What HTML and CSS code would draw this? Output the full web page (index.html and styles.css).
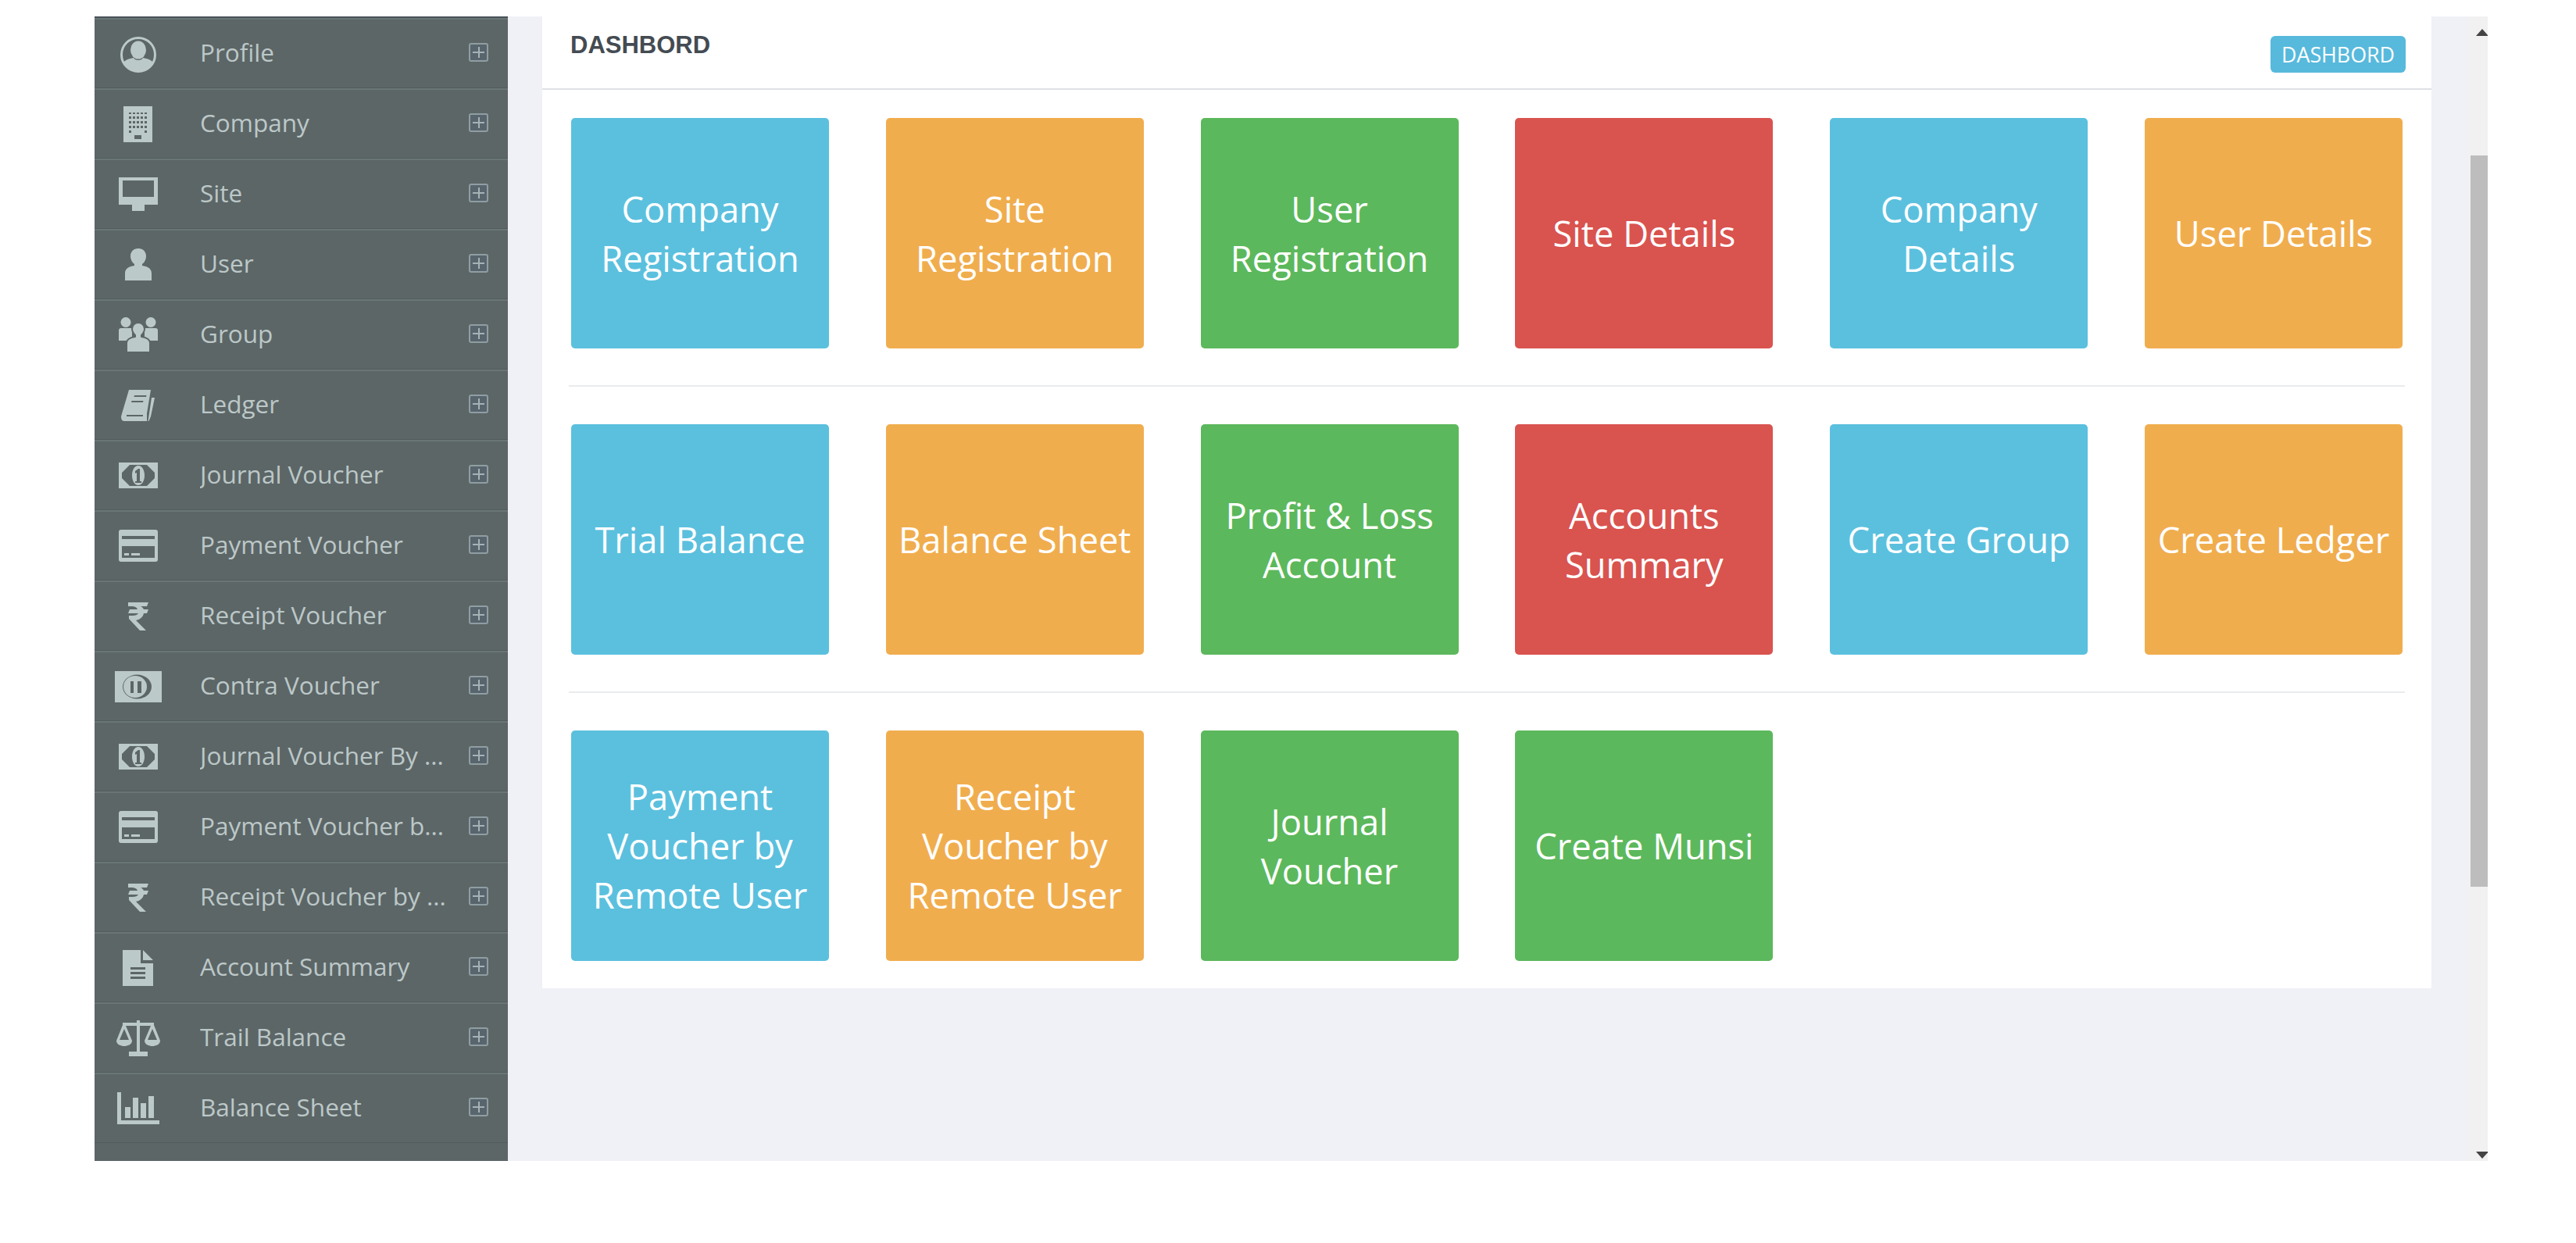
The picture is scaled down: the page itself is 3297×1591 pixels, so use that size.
FILE: index.html
```html
<!DOCTYPE html>
<html lang="en">
<head>
<meta charset="utf-8">
<title>Dashbord</title>
<link rel="stylesheet" href="styles.css">
</head>
<body>
<svg class="defs" width="0" height="0" aria-hidden="true">
  <symbol id="i-profile" viewBox="0 0 46 46">
    <circle class="ring" cx="23" cy="23" r="21.500"/>
    <ellipse cx="23" cy="17" rx="10" ry="11.500"/>
    <path d="M17 27c1 2 3 3 6 3s5-1 6-3c6 1 11 3 13 6-3 7-10 11-19 11S7 40 4 33c2-3 7-5 13-6Z"/>
  </symbol>
  <symbol id="i-company" viewBox="0 0 37 46">
    <path d="M0 0H37V46H0Z"/>
    <path class="cut" d="M7 8h3v2H7Zm5 0h3v2h-3Zm5 0h3v2h-3Zm5 0h3v2h-3Zm5 0h3v2h-3ZM7 13h3v3H7Zm5 0h3v3h-3Zm5 0h3v3h-3Zm5 0h3v3h-3Zm5 0h3v3h-3ZM7 19h3v3H7Zm5 0h3v3h-3Zm5 0h3v3h-3Zm5 0h3v3h-3Zm5 0h3v3h-3ZM7 25h3v3H7Zm5 0h3v3h-3Zm5 0h3v3h-3Zm5 0h3v3h-3Zm5 0h3v3h-3ZM7 31h3v3H7Zm20 0h3v3h-3ZM14 37h9v5h-9Z"/>
  </symbol>
  <symbol id="i-site" viewBox="0 0 50 43"><path fill-rule="evenodd" d="M0 0H50V35H33V43H17V35H0ZM5 4V25H45V4Z"/></symbol>
  <symbol id="i-user" viewBox="0 0 34 41"><path d="M17 0c6 0 10 4 10 10 0 4-2 8-5 10v2c6 1 12 3 12 10v9H0v-9c0-7 6-9 12-10v-2C9 18 7 14 7 10 7 4 11 0 17 0Z"/></symbol>
  <symbol id="i-group" viewBox="0 0 50 45">
    <circle cx="9" cy="6.500" r="6.500"/><circle cx="41" cy="6.500" r="6.500"/>
    <path d="M3 14H17V30H0V17c0-2 1-3 3-3ZM33 14H47c2 0 3 1 3 3V30H33Z"/>
    <path class="edge" d="M25 7c5 0 8 4 8 8 0 3-2 6-4 8v2c6 1 11 3 11 8v12H10V33c0-5 5-7 11-8v-2c-2-2-4-5-4-8 0-4 3-8 8-8Z"/>
  </symbol>
  <symbol id="i-ledger" viewBox="0 0 43 40">
    <path fill-rule="evenodd" d="M10 0H38L33 30V40H4C1 40 0 37 0 34ZM17 7 16.500 9H32L32.500 7ZM13.500 14 13 16H28L28.500 14ZM7 32V34H28V32Z"/>
    <path d="M39 10H43L38 34 35.500 40H34.500Z"/>
  </symbol>
  <symbol id="i-money" viewBox="0 0 50 33"><path fill-rule="evenodd" d="M0 0H50V33H0ZM14 3 4 13V20L14 30H36L46 20V13L36 3ZM25 4C30 4 33 10 33 16.500S30 29 25 29 17 23 17 16.500 20 4 25 4ZM25 8 21 11V14L23 13V24H21V26H29V24H27V8Z"/></symbol>
  <symbol id="i-card" viewBox="0 0 50 41"><path fill-rule="evenodd" d="M3 0H47C49 0 50 1 50 3V38C50 40 49 41 47 41H3C1 41 0 40 0 38V3C0 1 1 0 3 0ZM4 8V12H46V8ZM4 21V36H46V21ZM7 30H13V33H7ZM16 30H27V33H16Z"/></symbol>
  <symbol id="i-rupee" viewBox="0 0 26 36"><path d="M0 0H26L24 5H16c2 1 3 2 4 4H26L24 14H20c-1 5-5 8-10 9L23 36H15L1 21V17H6c3 0 6-1 7-3H0L2 9H12C11 6 8 5 5 5H0Z"/></symbol>
  <symbol id="i-contra" viewBox="0 0 60 40">
    <path d="M0 0H60V40H0Z"/>
    <ellipse class="cut" cx="28.500" cy="20" rx="18.500" ry="15.500"/>
    <ellipse cx="26" cy="20" rx="15" ry="14"/>
    <path class="cut" d="M20 13h4v15h-4ZM29 13h5v15h-5Z"/>
  </symbol>
  <symbol id="i-doc" viewBox="0 0 39 46"><path fill-rule="evenodd" d="M0 0H23V17H39V46H0ZM10 22V25H29V22ZM10 28V31H29V28ZM10 34V37H29V34ZM26 0 39 13H26Z"/></symbol>
  <symbol id="i-scale" viewBox="0 0 56 46"><path fill-rule="evenodd" d="M26 0H30V3H48V6L56 26C56 31 50 33 46 33S36 31 36 26L44 7H30V40H40V46H16V40H26V7H12L20 26C20 31 14 33 10 33S0 31 0 26L8 6V3H26ZM10 11 4 25H16ZM46 11 40 25H52Z"/></symbol>
  <symbol id="i-chart" viewBox="0 0 54 41"><path d="M0 0H5V36H54V41H0ZM10 19H17V33H10ZM20 7H27V33H20ZM30 14H37V33H30ZM40 5H47V33H40Z"/></symbol>
</svg>
<div class="app">
  <aside class="sidebar">
    <ul class="menu">
      <li class="item"><span class="slot"><svg class="ico w46"><use href="#i-profile"/></svg></span><span class="label">Profile</span><span class="plus"></span></li>
      <li class="item"><span class="slot"><svg class="ico w37"><use href="#i-company"/></svg></span><span class="label">Company</span><span class="plus"></span></li>
      <li class="item"><span class="slot"><svg class="ico site"><use href="#i-site"/></svg></span><span class="label">Site</span><span class="plus"></span></li>
      <li class="item"><span class="slot"><svg class="ico user"><use href="#i-user"/></svg></span><span class="label">User</span><span class="plus"></span></li>
      <li class="item"><span class="slot"><svg class="ico group"><use href="#i-group"/></svg></span><span class="label">Group</span><span class="plus"></span></li>
      <li class="item"><span class="slot"><svg class="ico ledger"><use href="#i-ledger"/></svg></span><span class="label">Ledger</span><span class="plus"></span></li>
      <li class="item"><span class="slot"><svg class="ico money"><use href="#i-money"/></svg></span><span class="label">Journal Voucher</span><span class="plus"></span></li>
      <li class="item"><span class="slot"><svg class="ico card"><use href="#i-card"/></svg></span><span class="label">Payment Voucher</span><span class="plus"></span></li>
      <li class="item"><span class="slot"><svg class="ico rupee"><use href="#i-rupee"/></svg></span><span class="label">Receipt Voucher</span><span class="plus"></span></li>
      <li class="item"><span class="slot"><svg class="ico contra"><use href="#i-contra"/></svg></span><span class="label">Contra Voucher</span><span class="plus"></span></li>
      <li class="item"><span class="slot"><svg class="ico money"><use href="#i-money"/></svg></span><span class="label">Journal Voucher By ...</span><span class="plus"></span></li>
      <li class="item"><span class="slot"><svg class="ico card"><use href="#i-card"/></svg></span><span class="label">Payment Voucher b...</span><span class="plus"></span></li>
      <li class="item"><span class="slot"><svg class="ico rupee"><use href="#i-rupee"/></svg></span><span class="label">Receipt Voucher by ...</span><span class="plus"></span></li>
      <li class="item"><span class="slot"><svg class="ico doc"><use href="#i-doc"/></svg></span><span class="label">Account Summary</span><span class="plus"></span></li>
      <li class="item"><span class="slot"><svg class="ico scale"><use href="#i-scale"/></svg></span><span class="label">Trail Balance</span><span class="plus"></span></li>
      <li class="item"><span class="slot"><svg class="ico chart"><use href="#i-chart"/></svg></span><span class="label">Balance Sheet</span><span class="plus"></span></li>
    </ul>
  </aside>
  <main class="content">
    <section class="panel">
      <header class="panel-head">
        <h1 class="title">DASHBORD</h1>
        <span class="badge">DASHBORD</span>
      </header>
      <div class="panel-body">
        <div class="row">
          <a class="tile info">Company Registration</a>
          <a class="tile warn">Site Registration</a>
          <a class="tile ok">User Registration</a>
          <a class="tile bad">Site Details</a>
          <a class="tile info">Company Details</a>
          <a class="tile warn">User Details</a>
        </div>
        <div class="row">
          <a class="tile info">Trial Balance</a>
          <a class="tile warn">Balance Sheet</a>
          <a class="tile ok">Profit &amp; Loss Account</a>
          <a class="tile bad">Accounts Summary</a>
          <a class="tile info">Create Group</a>
          <a class="tile warn">Create Ledger</a>
        </div>
        <div class="row">
          <a class="tile info">Payment Voucher by Remote User</a>
          <a class="tile warn">Receipt Voucher by Remote User</a>
          <a class="tile ok">Journal Voucher</a>
          <a class="tile ok">Create Munsi</a>
        </div>
      </div>
    </section>
  </main>
  <div class="scrollbar">
    <span class="arrow up"></span>
    <span class="thumb"></span>
    <span class="arrow down"></span>
  </div>
</div>
</body>
</html>
```

FILE: styles.css
```css
* { box-sizing: border-box; }
html, body { margin: 0; height: 100%; background: #fff; overflow: hidden; }
body { padding: 21px 113px 105px 121px; font-family: "Open Sans", "Liberation Sans", sans-serif; }
.defs { display: block; height: 0; }

.app { display: flex; height: 1465px; background: #f0f1f6; overflow: hidden; }

.sidebar { width: 529px; flex: none; background: #5c6667; border-top: 2px solid #48525a; overflow: hidden; }
.menu { list-style: none; margin: 0; padding: 0; }
.item {
  display: grid;
  grid-template-columns: 111px 1fr 25px;
  column-gap: 24px;
  align-items: center;
  height: 90px;
  padding-right: 25px;
  border-top: 2px solid #6a7676;
  border-bottom: 1px solid #525c5d;
  color: #bcc8c8;
  font-size: 31.500px;
}
.slot { display: flex; justify-content: center; align-items: center; }
.ico { display: block; fill: #bcc9c9; }
.ico .cut, .cut { fill: #5c6667; }
.ring { fill: none; stroke: #bcc9c9; stroke-width: 3; }
.edge { stroke: #5c6667; stroke-width: 2; }
.w46 { width: 46px; height: 46px; margin-top: 2px; }
.w37 { width: 37px; height: 46px; }
.site { width: 50px; height: 43px; }
.user { width: 34px; height: 41px; }
.group { width: 50px; height: 45px; }
.ledger { width: 43px; height: 40px; }
.money { width: 50px; height: 33px; }
.card { width: 50px; height: 41px; }
.rupee { width: 26px; height: 36px; }
.contra { width: 60px; height: 40px; }
.doc { width: 39px; height: 46px; }
.scale { width: 56px; height: 46px; }
.chart { width: 54px; height: 41px; }
.label { white-space: nowrap; overflow: hidden; padding-bottom: 4px; }
.plus {
  position: relative;
  width: 25px;
  height: 24px;
  margin-bottom: 3px;
  border: 2px solid #8f9ea3;
  border-radius: 3px;
  background: #59656d;
}
.plus::before, .plus::after { content: ""; position: absolute; background: #a5b2b6; }
.plus::before { left: 3px; right: 3px; top: 9px; height: 2px; }
.plus::after { top: 3px; bottom: 3px; left: 9.500px; width: 2px; }

.content { flex: 1; padding-left: 44px; padding-right: 73px; }
.panel { background: #fff; }
.panel-head {
  display: flex;
  justify-content: space-between;
  height: 94px;
  padding: 0 33px 0 36px;
  border-bottom: 2px solid #dfe1e4;
}
.title {
  margin: 17px 0 0;
  font: bold 31px/40px "Liberation Sans", sans-serif;
  color: #444b52;
}
.badge {
  align-self: flex-start;
  margin-top: 25px;
  padding: 0 14px;
  height: 47px;
  border-radius: 6px;
  background: #57b9dc;
  color: #fff;
  font-size: 26.800px;
  line-height: 47px;
}
.panel-body { padding: 36px 34px 35px; }
.row {
  display: flex;
  gap: 72.800px;
  padding: 0 3px 47px;
  margin-bottom: 48px;
  border-bottom: 2px solid #e9ebee;
}
.row:last-child { padding-bottom: 0; margin-bottom: 0; border-bottom: 0; }
.tile {
  display: flex;
  flex: none;
  align-items: center;
  justify-content: center;
  width: 330px;
  height: 295px;
  padding: 0 8px;
  border-radius: 5px;
  color: #fff;
  text-align: center;
  font-size: 45.300px;
  line-height: 63px;
}
.info { background: #5bc0de; }
.warn { background: #f0ad4e; }
.ok { background: #5cb85c; }
.bad { background: #d9534f; }

.scrollbar { position: relative; flex: none; width: 28px; background: #f1f1f1; margin-left: -28px; }
.thumb { position: absolute; top: 178px; left: 5px; right: 0; height: 936px; background: #bdbdbd; }
.arrow { position: absolute; right: 0; width: 0; height: 0; border-left: 8px solid transparent; border-right: 8px solid transparent; }
.up { top: 16px; border-bottom: 9px solid #444; }
.down { bottom: 3px; border-top: 9px solid #444; }
```
